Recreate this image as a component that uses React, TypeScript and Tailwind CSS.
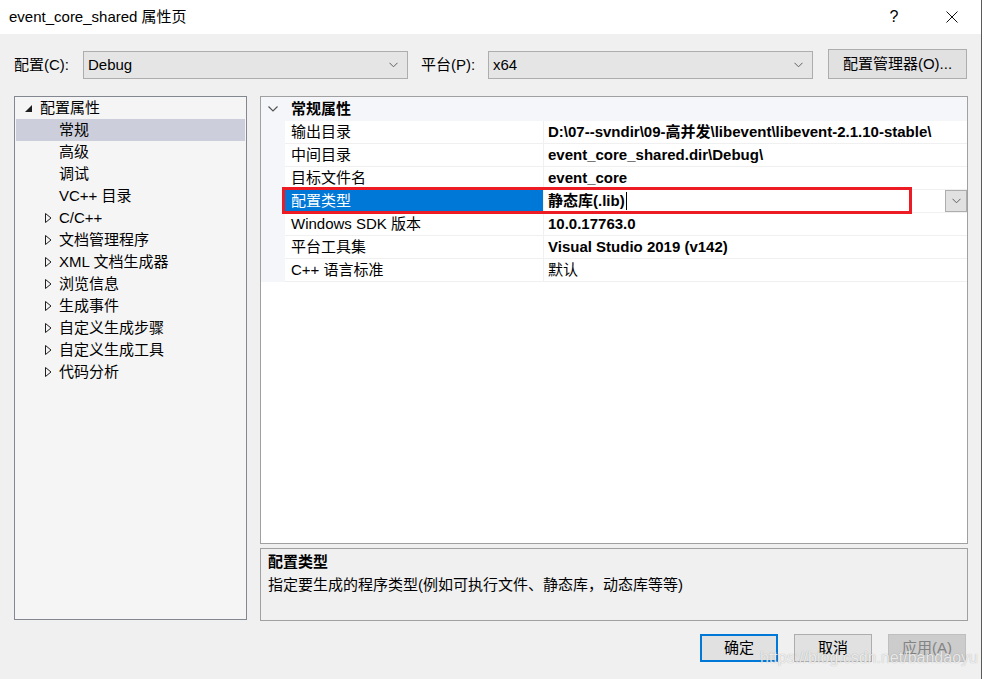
import React from 'react';

const FONT = "font-['Liberation_Sans','Noto_Sans_CJK_SC',sans-serif]";

const Chevron: React.FC<{ className?: string }> = ({ className }) => (
  <svg width="9" height="6" viewBox="0 0 9 6" className={className}>
    <polyline points="0.5,0.8 4.5,4.8 8.5,0.8" fill="none" stroke="#606060" strokeWidth="1" />
  </svg>
);

const Combo: React.FC<{ value: string; className: string }> = ({ value, className }) => (
  <div className={`h-[28px] bg-[#e5e5e5] border border-[#adadad] flex items-center pl-[4px] pr-[9px] ${className}`}>
    <span className="flex-1 leading-[20px]">{value}</span>
    <Chevron />
  </div>
);

type TreeItem = { label: string; level: 0 | 1; arrow?: 'open' | 'closed'; selected?: boolean };

const treeItems: TreeItem[] = [
  { label: '配置属性', level: 0, arrow: 'open' },
  { label: '常规', level: 1, selected: true },
  { label: '高级', level: 1 },
  { label: '调试', level: 1 },
  { label: 'VC++ 目录', level: 1 },
  { label: 'C/C++', level: 1, arrow: 'closed' },
  { label: '文档管理程序', level: 1, arrow: 'closed' },
  { label: 'XML 文档生成器', level: 1, arrow: 'closed' },
  { label: '浏览信息', level: 1, arrow: 'closed' },
  { label: '生成事件', level: 1, arrow: 'closed' },
  { label: '自定义生成步骤', level: 1, arrow: 'closed' },
  { label: '自定义生成工具', level: 1, arrow: 'closed' },
  { label: '代码分析', level: 1, arrow: 'closed' },
];

const OpenArrow = () => (
  <svg width="7" height="7" viewBox="0 0 7 7">
    <polygon points="7,0 7,7 0,7" fill="#1e1e1e" />
  </svg>
);

const ClosedArrow = () => (
  <svg width="7" height="10" viewBox="0 0 7 10">
    <polygon points="0.5,0.5 6,5 0.5,9.5" fill="none" stroke="#1e1e1e" strokeWidth="1" />
  </svg>
);

type Prop = { name: string; value: string; bold?: boolean; selected?: boolean };

const props: Prop[] = [
  { name: '输出目录', value: 'D:\\07--svndir\\09-高并发\\libevent\\libevent-2.1.10-stable\\', bold: true },
  { name: '中间目录', value: 'event_core_shared.dir\\Debug\\', bold: true },
  { name: '目标文件名', value: 'event_core', bold: true },
  { name: '配置类型', value: '静态库(.lib)', bold: true, selected: true },
  { name: 'Windows SDK 版本', value: '10.0.17763.0', bold: true },
  { name: '平台工具集', value: 'Visual Studio 2019 (v142)', bold: true },
  { name: 'C++ 语言标准', value: '默认' },
];

export default function App() {
  return (
    <div className={`w-[984px] h-[679px] bg-white flex ${FONT} text-[15px] text-black`}>
      <div className="w-[982px] h-full flex flex-col border-r border-[#5a5a5a]">
        {/* title bar */}
        <div className="h-[34px] shrink-0 bg-white flex items-center pl-[9px]">
          <span className="flex-1 leading-[20px]">event_core_shared 属性页</span>
          <span className="w-[20px] text-center leading-[20px] text-[16px]">?</span>
          <svg width="12" height="12" viewBox="0 0 12 12" className="ml-[42px] mr-[23px]">
            <path d="M0.5 0.5 L11.5 11.5 M11.5 0.5 L0.5 11.5" stroke="#111" strokeWidth="1" />
          </svg>
        </div>

        {/* body */}
        <div className="flex-1 bg-[#f0f0f0] flex flex-col relative">
          {/* config row */}
          <div className="mt-[15px] h-[30px] flex items-end pl-[14px]">
            <span className="w-[69px] h-[28px] flex items-center leading-[20px]">配置(C):</span>
            <Combo value="Debug" className="w-[325px]" />
            <span className="w-[80px] h-[28px] flex items-center pl-[13px] leading-[20px]">平台(P):</span>
            <Combo value="x64" className="w-[325px]" />
            <div className="ml-[15px] w-[139px] h-[30px] bg-[#e1e1e1] border border-[#adadad] flex items-center justify-center leading-[20px]">
              配置管理器(O)...
            </div>
          </div>

          {/* main area */}
          <div className="mt-[17px] flex pl-[14px]">
            {/* tree */}
            <div className="w-[233px] h-[524px] border border-[#828790] bg-[#f5f5f5] px-[1px]">
              {treeItems.map((it, i) => (
                <div
                  key={i}
                  className={`h-[22px] flex items-center ${it.selected ? 'bg-[#cccedb]' : ''} ${
                    it.level === 0 ? 'pl-[9px]' : 'pl-[29px]'
                  }`}
                >
                  <span className={`${it.level === 0 ? 'w-[15px]' : 'w-[14px]'} flex items-center`}>
                    {it.arrow === 'open' && <OpenArrow />}
                    {it.arrow === 'closed' && <ClosedArrow />}
                  </span>
                  <span className="leading-[20px] whitespace-nowrap">{it.label}</span>
                </div>
              ))}
            </div>

            {/* right column */}
            <div className="ml-[13px] w-[708px] flex flex-col">
              <div className="h-[448px] border border-[#a0a0a0] bg-white relative overflow-hidden">
                <div className="h-[24px] bg-[#f5f6f9] flex items-center">
                  <span className="w-[24px] flex justify-center">
                    <svg width="10" height="6" viewBox="0 0 10 6">
                      <polyline points="0.5,0.5 5,5 9.5,0.5" fill="none" stroke="#555" strokeWidth="1.2" />
                    </svg>
                  </span>
                  <span className="pl-[6px] font-bold leading-[20px]">常规属性</span>
                </div>
                {props.map((p, i) => (
                  <div key={i} className="h-[23px] flex">
                    <div className="w-[24px] bg-[#f5f6f9]" />
                    <div
                      className={`w-[259px] border-b border-r border-[#f0f0f0] flex items-center pl-[6px] whitespace-nowrap ${
                        p.selected ? 'bg-[#0078d7] text-white' : ''
                      }`}
                    >
                      <span className="leading-[20px]">{p.name}</span>
                    </div>
                    <div className="flex-1 min-w-0 border-b border-[#f0f0f0] flex items-center pl-[4px] overflow-hidden">
                      <span className={`leading-[20px] whitespace-nowrap ${p.bold ? 'font-bold' : ''}`}>{p.value}</span>
                      {p.selected && (
                        <>
                          <span className="ml-[1px] w-[1px] h-[18px] bg-black" />
                          <span className="flex-1" />
                          <span className="w-[22px] h-[22px] self-end bg-[#e1e1e1] border border-[#adadad] flex items-center justify-center">
                            <Chevron />
                          </span>
                        </>
                      )}
                    </div>
                  </div>
                ))}
                {/* red annotation box */}
                <div className="absolute left-[21px] top-[90px] w-[630px] h-[27px] border-[3px] border-[#ed1c24]" />
              </div>

              <div className="mt-[4px] h-[73px] border border-[#a0a0a0] bg-[#f0f0f0] pl-[7px] pt-[3px]">
                <div className="font-bold leading-[20px]">配置类型</div>
                <div className="mt-[3px] leading-[20px]">指定要生成的程序类型(例如可执行文件、静态库，动态库等等)</div>
              </div>
            </div>
          </div>

          {/* buttons */}
          <div className="mt-[13px] flex justify-end pr-[15px] gap-[16px]">
            <div className="w-[78px] h-[28px] bg-[#e1e1e1] border-2 border-[#0078d7] flex items-center justify-center leading-[20px]">
              确定
            </div>
            <div className="w-[78px] h-[28px] bg-[#e1e1e1] border border-[#adadad] flex items-center justify-center leading-[20px]">
              取消
            </div>
            <div className="w-[78px] h-[28px] bg-[#cccccc] border border-[#bfbfbf] text-[#838383] flex items-center justify-center leading-[20px]">
              应用(A)
            </div>
          </div>

          {/* watermark */}
          <div className="absolute left-[760px] top-[614px] text-[16px] leading-[20px] text-white/80 [text-shadow:0_0_1px_rgba(0,0,0,0.35)] font-['Liberation_Sans',sans-serif]">
            https://blog.csdn.net/bandaoyu
          </div>
        </div>
      </div>
    </div>
  );
}
